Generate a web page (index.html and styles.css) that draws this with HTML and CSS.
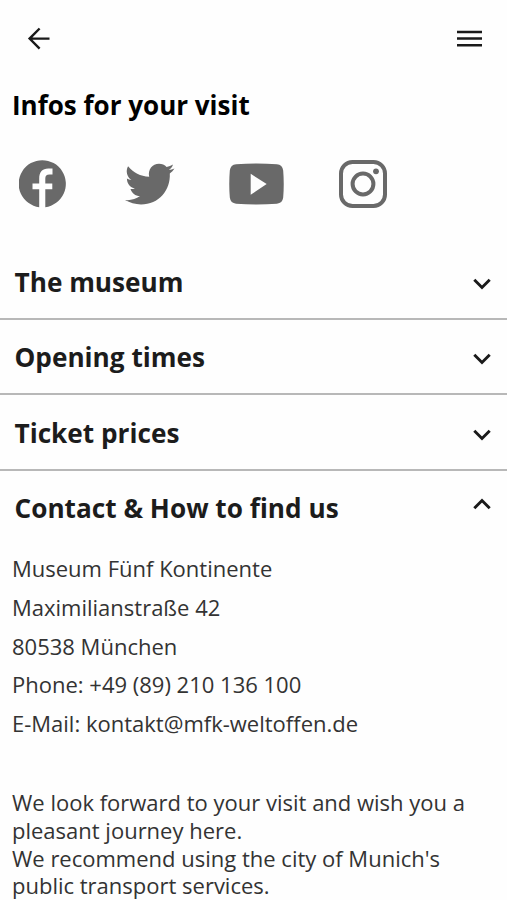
FILE: index.html
```html
<!DOCTYPE html>
<html lang="en">
<head>
  <meta charset="UTF-8" />
  <meta name="viewport" content="width=device-width, initial-scale=1" />
  <title>Infos for your visit</title>
  <link rel="stylesheet" href="styles.css">
</head>
<body>
  <header class="topbar">
    <a href="#" class="icon-link" aria-label="Back">
      <svg width="24" height="24" viewBox="0 0 24 24" fill="none" stroke="#1a1a1a" stroke-width="2.4"><path d="M22.500 12.600H3M12.600 2.500L2.600 12.600 12.600 22.700" /></svg>
    </a>
    <a href="#" class="icon-link" aria-label="Menu">
      <svg width="25" height="18" viewBox="0 0 25 18" fill="#1a1a1a"><path d="M0 1.700h25v2.500H0zM0 8.300h25v2.500H0zM0 15h25v2.500H0z" /></svg>
    </a>
  </header>
  <main>
    <h1>Infos for your visit</h1>

    <nav class="social" aria-label="Social media">
      <a href="#" aria-label="Facebook">
        <svg width="48" height="48" viewBox="0 0 48 48"><path d="M20.200 47.200V29.300h-6.700V23.500h6.700V18.500c0-6.500 3.200-10 9-10h4.300v6h-3c-3 0-4.200 1.400-4.200 4v5h7v5.800h-7v17.900A23.600 23.600 0 1 0 20.200 47.200z" /></svg>
      </a>
      <a href="#" aria-label="Twitter">
        <svg width="50" height="42" viewBox="0 0 50 42"><path d="M49.500 5.600c-1.200 1.900-2.800 3.500-4.700 4.800C45.700 27 34 41.400 16 41.400 10.200 41.400 4.800 39.800 0 37c5.600.6 10.800-.8 15-4-4.700-.1-8.200-3-9.500-7.100 1.500.3 3 .2 4.400-.2C5 24.600 1.900 20.500 1.900 15.600c1.300.8 2.900 1.200 4.500 1.300C2 13.700.3 8 3.100 3.200 8.200 9.500 15.500 13.300 24.200 13.800 22.600 6.500 27.400.8 34 .8c3 0 5.700 1.200 7.600 3.200 2.300-.4 4.500-1.300 6.400-2.500-.7 2.400-2.300 4.300-4.300 5.500 2.200-.2 3.900-.7 5.800-1.400z" /></svg>
      </a>
      <a href="#" aria-label="YouTube">
        <svg width="55" height="42" viewBox="0 0 54 42" preserveAspectRatio="none"><path fill-rule="evenodd" d="M7 1.300Q27-.3 47 1.300Q52.500 1.800 53.200 7.500Q54.300 21 53.200 34.500Q52.500 40.200 47 40.700Q27 42.300 7 40.700Q1.500 40.200.8 34.500Q-.3 21 .8 7.500Q1.500 1.800 7 1.300zM21.300 10.800v21L37 21z" /></svg>
      </a>
      <a href="#" aria-label="Instagram">
        <svg width="48" height="48" viewBox="0 0 48 48"><rect class="line" x="2" y="2" width="44" height="44" rx="11.500" /><circle class="line" cx="24" cy="24" r="10.400" /><circle cx="37" cy="11.300" r="2.900" /></svg>
      </a>
    </nav>

    <section class="item">
      <h2>The museum</h2>
      <svg class="chevron" width="18" height="12" viewBox="0 0 18 12"><path d="M1.300 1.800L9 9.500l7.700-7.700" /></svg>
    </section>
    <section class="item">
      <h2>Opening times</h2>
      <svg class="chevron" width="18" height="12" viewBox="0 0 18 12"><path d="M1.300 1.800L9 9.500l7.700-7.700" /></svg>
    </section>
    <section class="item">
      <h2>Ticket prices</h2>
      <svg class="chevron" width="18" height="12" viewBox="0 0 18 12"><path d="M1.300 1.800L9 9.500l7.700-7.700" /></svg>
    </section>
    <section class="item open">
      <h2>Contact &amp; How to find us</h2>
      <svg class="chevron" width="18" height="12" viewBox="0 0 18 12"><path d="M1.300 10.200L9 2.500l7.700 7.700" /></svg>
    </section>

    <div class="details">
      <address>
        Museum Fünf Kontinente<br>
        Maximilianstraße 42<br>
        80538 München<br>
        Phone: +49 (89) 210 136 100<br>
        E-Mail: kontakt@mfk-weltoffen.de
      </address>
      <p>We look forward to your visit and wish you a pleasant journey here.</p>
      <p>We recommend using the city of Munich's public transport services.</p>
    </div>
  </main>
</body>
</html>
```
FILE: styles.css
```css
* {
  box-sizing: border-box;
}
body {
  margin: 0;
  height: 900px;
  overflow: hidden;
  background-color: #fefefe;
  color: #333;
  font-family: "Open Sans", "Noto Sans", sans-serif;
}
.topbar {
  display: flex;
  justify-content: space-between;
  align-items: center;
  height: 76px;
  padding: 0 25px 0 27px;
}
.icon-link,
.social a {
  display: block;
}
svg {
  display: block;
}
h1 {
  margin: 0;
  padding: 11px 12px 0;
  color: #000;
  font-size: 26px;
  line-height: 36px;
  font-weight: 700;
}
.social {
  display: grid;
  grid-template-columns: 106px 104px 110px 48px;
  align-items: center;
  height: 121px;
  padding: 1px 0 0 19px;
  fill: #696969;
}
.social .line {
  fill: none;
  stroke: #696969;
  stroke-width: 4;
}
.item {
  display: flex;
  justify-content: space-between;
  align-items: center;
  height: 75.5px;
  padding: 2px 16px 0 14.5px;
  border-bottom: 2px solid #b8b8b8;
}
.item.open {
  border-color: transparent;
}
h2 {
  margin: 0;
  color: #1c1c1c;
  font-size: 26.2px;
  line-height: 36px;
  font-weight: 700;
}
.chevron {
  margin-top: 4px;
  fill: none;
  stroke: #1a1a1a;
  stroke-width: 2.9;
}
.open .chevron {
  margin: 0 0 9px;
}
.details {
  padding: 3px 12px 0;
  font-size: 22px;
}
address {
  margin-bottom: 46px;
  font-style: normal;
  line-height: 38.8px;
}
p {
  margin: 0;
  line-height: 27.8px;
}
```
